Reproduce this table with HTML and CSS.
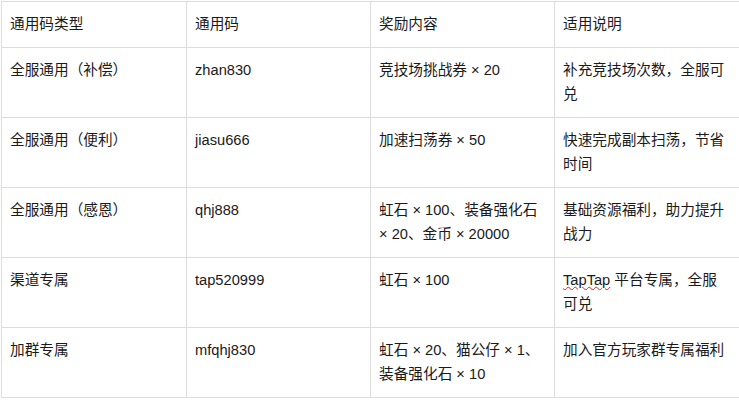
FILE: index.html
```html
<!DOCTYPE html>
<html lang="zh-CN">
<head>
<meta charset="utf-8">
<title>通用码</title>
<link rel="stylesheet" href="styles.css">
</head>
<body>
<table class="codes">
  <colgroup>
    <col class="c1"><col class="c2"><col class="c3"><col class="c4">
  </colgroup>
  <thead>
    <tr><th>通用码类型</th><th>通用码</th><th>奖励内容</th><th>适用说明</th></tr>
  </thead>
  <tbody>
    <tr><td>全服通用（补偿）</td><td>zhan830</td><td>竞技场挑战券 × 20</td><td>补充竞技场次数，全服可兑</td></tr>
    <tr><td>全服通用（便利）</td><td>jiasu666</td><td>加速扫荡券 × 50</td><td>快速完成副本扫荡，节省时间</td></tr>
    <tr><td>全服通用（感恩）</td><td>qhj888</td><td>虹石 × 100、装备强化石 × 20、金币 × 20000</td><td>基础资源福利，助力提升战力</td></tr>
    <tr><td>渠道专属</td><td>tap520999</td><td>虹石 × 100</td><td><span class="spell">TapTap</span> 平台专属，全服可兑</td></tr>
    <tr><td>加群专属</td><td>mfqhj830</td><td>虹石 × 20、猫公仔 × 1、装备强化石 × 10</td><td>加入官方玩家群专属福利</td></tr>
  </tbody>
</table>
</body>
</html>
```

FILE: styles.css
```css
html, body {
  margin: 0;
  padding: 0;
  background: #ffffff;
}
body {
  padding: 1px 0 0 1px;
  font-family: "Liberation Sans", Arial, "Noto Sans CJK SC", sans-serif;
  font-size: 14.67px;
  color: #1a1a1a;
}
.codes {
  border-collapse: collapse;
  table-layout: fixed;
  width: 738px;
}
.codes .c1 { width: 185px; }
.codes .c2 { width: 184px; }
.codes .c3 { width: 184px; }
.codes .c4 { width: 185px; }
.codes th,
.codes td {
  border: 1px solid #dddddd;
  padding: 10px 8px;
  line-height: 24.5px;
  text-align: left;
  vertical-align: top;
  font-weight: normal;
  word-break: break-all;
}
.spell {
  text-decoration: underline wavy #e02020;
  text-decoration-thickness: 1px;
  text-underline-offset: 1px;
}
```
